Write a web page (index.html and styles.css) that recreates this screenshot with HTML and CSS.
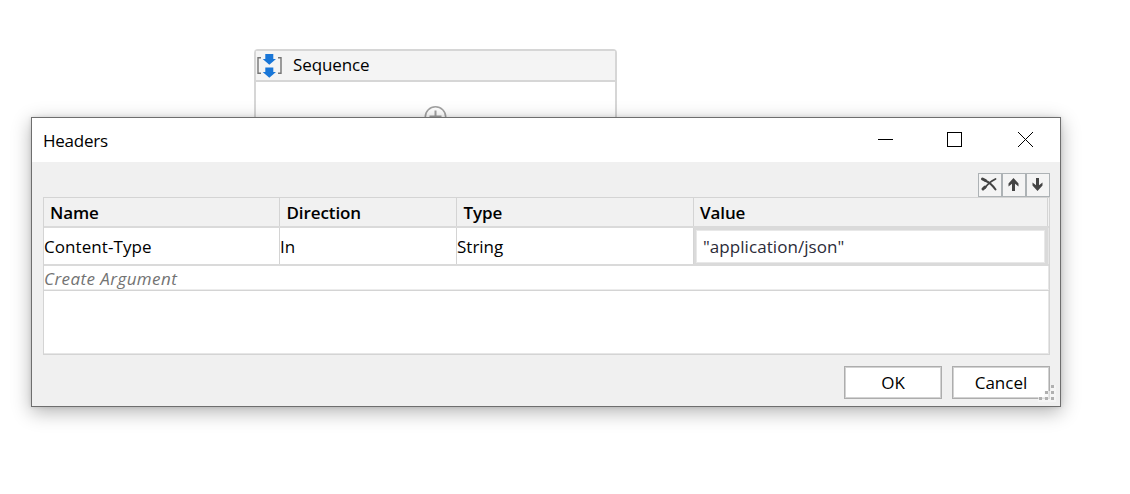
FILE: index.html
```html
<!DOCTYPE html>
<html lang="en">
<head>
<meta charset="utf-8">
<title>Headers</title>
<link rel="stylesheet" href="styles.css">
</head>
<body>
<main class="desktop">
  <section class="activity">
    <header class="activity-head">
      <svg class="seq-icon" width="26" height="27" viewBox="0 0 26 27">
        <path d="M5 5.700H2V21.300H5M22 5.700H25V21.300H22" fill="none" stroke="#757575" stroke-width="1.400"/>
        <path d="M9.300 2h8v5H20l-6.700 5.800L6.700 7h2.600zM9.300 15.500h8v4.500H20l-6.700 5.800L6.700 20h2.600z" fill="#1976d7"/>
      </svg>
      <span class="t-seq">Sequence</span>
    </header>
    <div class="activity-body">
      <svg width="24" height="24" viewBox="0 0 24 24" fill="none" stroke="#a2a2a2" stroke-width="1.600">
        <circle cx="11.500" cy="12" r="10.200"/><path d="M11.500 5.500v13M5.500 11.500h12" stroke-width="2"/>
      </svg>
    </div>
  </section>

  <section class="dialog">
    <header class="titlebar">
      <span class="t-title">Headers</span>
      <svg class="caption" width="157" height="16" viewBox="0 0 157 16" fill="none" stroke="#000">
        <path d="M1 7.500h15"/>
        <rect x="70.500" y=".5" width="14" height="14"/>
        <path d="M141 0l15 15M156 0l-15 15"/>
      </svg>
    </header>
    <div class="content">
      <div class="tools">
        <button class="tool" aria-label="Delete"><svg width="22" height="22" viewBox="0 0 22 22" fill="none" stroke="#444" stroke-linecap="round"><path d="M3.500 5l3 1.500" stroke-width="3"/><path d="M6 6.500Q12 9 16.500 15.500" stroke-width="2"/><path d="M16.500 5Q10 8 6 14" stroke-width="1.800"/><path d="M6 13l-2 2" stroke-width="3"/></svg></button>
        <button class="tool" aria-label="Move up"><svg width="22" height="22" viewBox="0 0 22 22"><path d="M10.500 4l5 5.500v3L12 9.800V17H9V9.800l-3.500 2.700v-3z" fill="#444"/></svg></button>
        <button class="tool" aria-label="Move down"><svg width="22" height="22" viewBox="0 0 22 22"><path d="M10.500 17l5-5.500v-3L12 11.200V4H9v7.200L5.500 8.500v3z" fill="#444"/></svg></button>
      </div>
      <div class="grid">
        <div class="row head">
          <span><b class="h-name">Name</b></span><span><b class="h-dir">Direction</b></span><span><b class="h-type">Type</b></span><span><b class="h-value">Value</b></span>
        </div>
        <div class="row item">
          <span><i class="c-name">Content-Type</i></span><span><i>In</i></span><span><i class="c-type">String</i></span>
          <span class="editor"><span class="field"><i class="c-value">"application/json"</i></span></span>
        </div>
        <div class="create"><span class="t-create">Create Argument</span></div>
      </div>
      <footer class="actions">
        <button class="btn"><span class="t-ok">OK</span></button>
        <button class="btn"><span class="t-cancel">Cancel</span></button>
      </footer>
    </div>
    <svg class="grip" width="18" height="18" viewBox="0 0 18 18">
      <path d="M13 1h5v17H0v-5h6V7h7z" fill="#f7f7f7" opacity=".65"/>
      <path d="M13 1h3v3h-3zM7 7h3v3H7zM13 7h3v3h-3zM1 13h3v3H1zM7 13h3v3H7zM13 13h3v3h-3z" fill="#b0b0b0"/>
    </svg>
  </section>
</main>
</body>
</html>
```

FILE: styles.css
```css
* { box-sizing: border-box; }
body { margin: 0; background: #fff; color: #000; font: 17px/22px "Open Sans", "Noto Sans", sans-serif; }
button { font: inherit; color: inherit; margin: 0; padding: 0; }
i { font-style: normal; padding-top: 2px; }
b { font-weight: 600; letter-spacing: -.1px; padding-top: 1px; }
.desktop { position: relative; width: 1130px; height: 494px; overflow: hidden; }

.activity { position: absolute; left: 254px; top: 49px; width: 363px; height: 130px; border: 2px solid #d6d6d6; border-radius: 4px 4px 0 0; background: #fff; }
.activity-head { height: 31px; display: flex; align-items: center; gap: 11px; background: #f4f4f4; border-bottom: 2px solid #d6d6d6; }
.seq-icon { margin-bottom: 0; }
.t-seq { padding-bottom: 2px; letter-spacing: -.12px; }
.activity-body { display: flex; justify-content: center; padding-top: 23px; }

.dialog { position: absolute; left: 31px; top: 117px; width: 1030px; height: 290px; border: 1px solid #6e6e6e; background: #f0f0f0; box-shadow: 0 5px 18px rgba(0, 0, 0, .3), 0 0 4px rgba(0, 0, 0, .12); }
.titlebar { height: 44px; background: #fff; display: flex; align-items: center; justify-content: space-between; padding: 0 26px 0 11px; }
.t-title { padding-top: 2px; letter-spacing: -.25px; }
.content { padding: 11px 10px 0 11px; }
.tools { display: flex; justify-content: flex-end; height: 24px; }
.tool { width: 24px; height: 24px; border: 1px solid #adb2b5; background: #f4f4f4; display: flex; }

.grid { height: 158px; background: #fff; border: 1px solid #d4d4d4; box-shadow: inset -1px -1px 0 #e6e6e6; }
.row { display: grid; grid-template-columns: 236px 177px 237px 354px; border-bottom: 2px solid #dadada; }
.row > span { display: flex; align-items: center; border-right: 1px solid #d4d4d4; white-space: nowrap; }
.head { height: 30px; background: #f1f1f1; }
.head > span { padding-left: 6px; }
.h-dir, .h-type { margin-left: .5px; }
.item { height: 38px; }
.row > .editor { background: #dadada; padding: 2px 3px 1px 2px; border-right: 0; }
.field { flex: 1; height: 100%; display: flex; align-items: center; background: #fff; border: 1px solid #e8e8e8; padding-left: 6px; color: #2b2b38; }
.c-name { letter-spacing: .08px; }
.c-value { letter-spacing: .06px; padding-top: 0; }
.create { height: 25px; border-bottom: 1px solid #d4d4d4; box-shadow: inset 0 -1px 0 #ececec; color: #737373; font-style: italic; display: flex; align-items: center; }
.t-create { padding-top: 2px; letter-spacing: .43px; }

.actions { display: flex; justify-content: flex-end; gap: 10px; padding-top: 11px; }
.btn { width: 98px; height: 33px; background: #fff; border: 1px solid #adadad; box-shadow: inset 0 0 0 1px #d2d2d2; }
.grip { position: absolute; right: 4px; bottom: 4px; }
```
